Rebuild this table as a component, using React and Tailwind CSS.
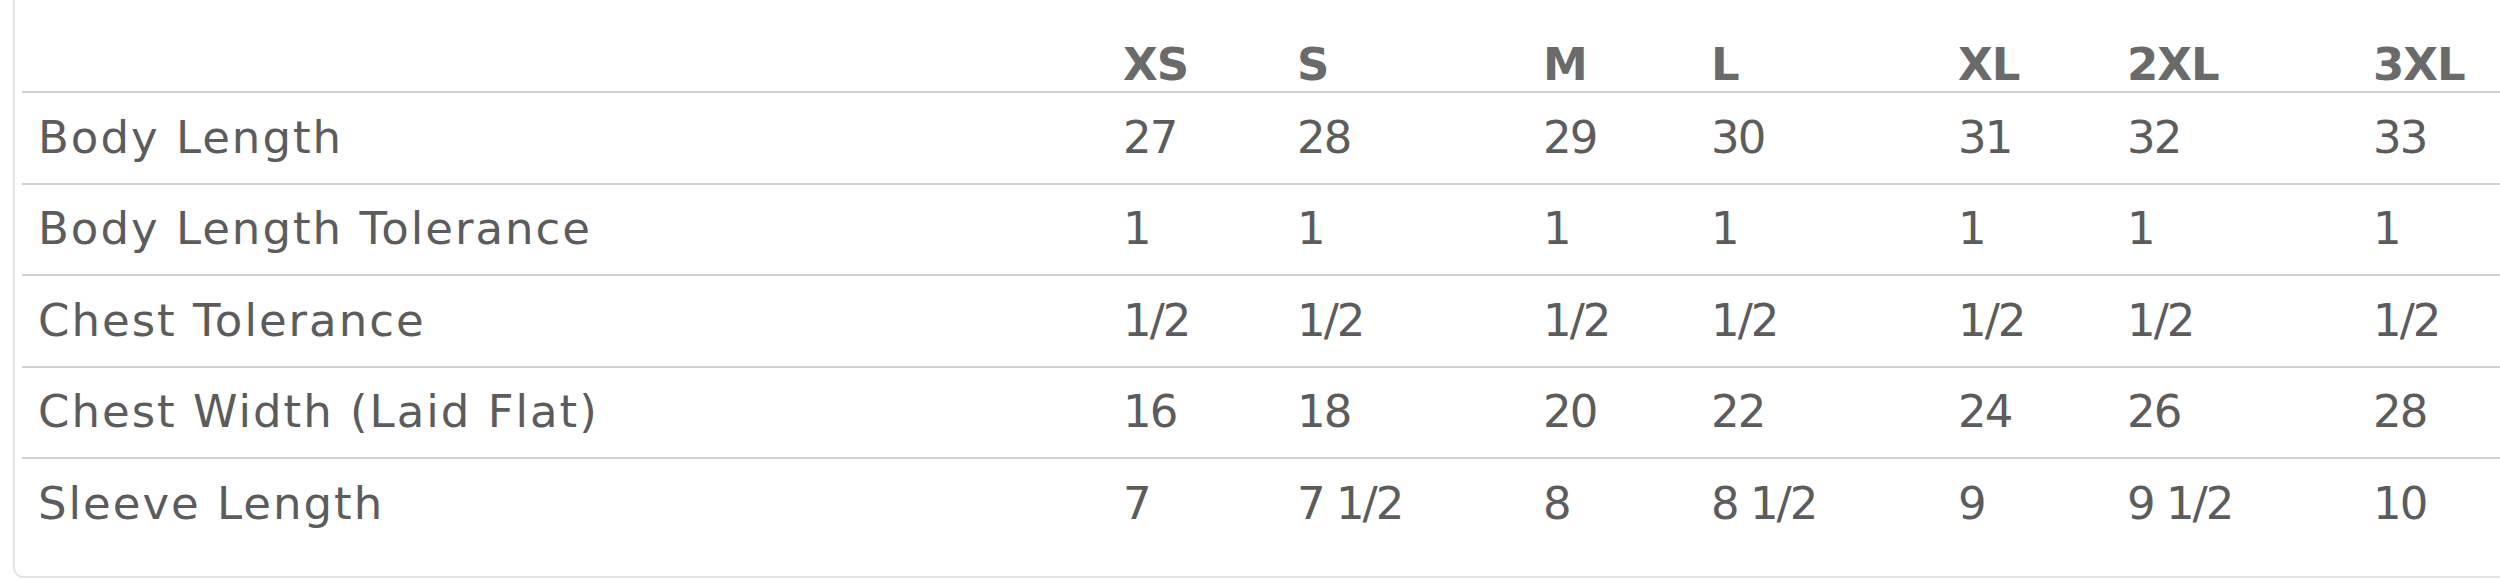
const SIZES = ['XS', 'S', 'M', 'L', 'XL', '2XL', '3XL'];

const ROWS = [
  { label: 'Body Length', values: ['27', '28', '29', '30', '31', '32', '33'] },
  { label: 'Body Length Tolerance', values: ['1', '1', '1', '1', '1', '1', '1'] },
  { label: 'Chest Tolerance', values: ['1/2', '1/2', '1/2', '1/2', '1/2', '1/2', '1/2'] },
  { label: 'Chest Width (Laid Flat)', values: ['16', '18', '20', '22', '24', '26', '28'] },
  { label: 'Sleeve Length', values: ['7', '7 1/2', '8', '8 1/2', '9', '9 1/2', '10'] },
];

// column widths follow the auto table layout of the original
const GRID = 'grid grid-cols-[1085px_174px_246px_168px_247px_169px_246px_1fr]';

export default function App() {
  return (
    <div className="w-[2500px] h-[580px] bg-white overflow-hidden font-['DejaVu_Sans',sans-serif]">
      <div className="ml-[13px] h-[578px] border-l-2 border-b-2 border-[#e3e3e3] rounded-bl-[10px] pl-[7px] pb-[28px]">
        {/* Header */}
        <div className={`${GRID} h-[93px] items-end border-b-2 border-[#d0d0d0] pb-[4px]`}>
          <div />
          {SIZES.map(s => (
            <div key={s} className="pl-4 text-[45px] leading-none font-bold tracking-[-1px] text-[#6a6a6a]">
              {s}
            </div>
          ))}
        </div>

        {/* Body rows */}
        {ROWS.map((row, i) => (
          <div
            key={row.label}
            className={`${GRID} h-[91.5px] items-center pt-[14px] text-[45px] leading-none text-[#5c5c5c] ${
              i < ROWS.length - 1 ? 'border-b-2 border-[#d0d0d0]' : ''
            }`}
          >
            <div className="pl-4 whitespace-nowrap tracking-[2px]">{row.label}</div>
            {row.values.map((v, j) => (
              <div key={j} className="pl-4 whitespace-nowrap tracking-[-2px]">{v}</div>
            ))}
            <div />
          </div>
        ))}
      </div>
    </div>
  );
}
